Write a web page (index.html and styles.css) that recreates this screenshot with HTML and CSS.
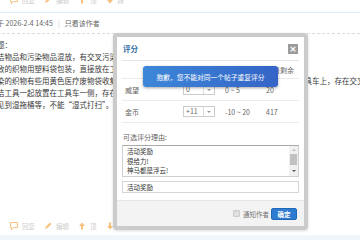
FILE: index.html
```html
<!DOCTYPE html>
<html lang="zh-CN">
<head>
    <meta charset="UTF-8">
    <meta name="viewport" content="width=device-width, initial-scale=1.0">
    <title>评分</title>
    <link rel="stylesheet" href="styles.css">
</head>
<body>
    <div class="ops ops-top">
        <span class="op"><svg viewBox="0 0 8 8"><path d="M0.5 0.5h7v5h-4l-2 2v-2h-1z" fill="none" stroke="#f7c07c" stroke-width="1"/></svg>回复</span>
        <span class="op"><svg viewBox="0 0 8 8"><path d="M1 7l1-2.5 4-4 1.5 1.5-4 4z" fill="#f7c07c"/></svg>编辑</span>
        <span class="op"><svg viewBox="0 0 8 8"><path d="M4 0.5l3 3.5h-2v3.5h-2v-3.5h-2z" fill="#f7c07c"/></svg>顶</span>
        <span class="op"><svg viewBox="0 0 8 8"><path d="M4 7.5l3-3.5h-2v-3.5h-2v3.5h-2z" fill="#f7c07c"/></svg>踩</span>
    </div>
    <div class="blue-line"></div>
    <div class="post-meta">于 2026-2-4 14:45<span class="pipe">|</span>只看该作者</div>

    <div class="post-body">
        <div>题：</div>
        <div>洁物品和污染物品混放，有交叉污染的情况，需要进行整改并加强日常管理。</div>
        <div>致的织物用塑料袋包装，直接放在工具车上，存在交叉污染的风险隐患。</div>
        <div>染的织物有些用黄色医疗废物袋收集，放置时污染布草与清洁工具等物品混放在同一辆保洁工具车上，存在交叉污染风险。</div>
        <div>洁工具一起放置在工具车一侧，存在交叉污染的隐患。</div>
        <div>见到湿拖桶等，不能“湿式打扫”。</div>
    </div>

    <div class="ops ops-bottom">
        <span class="op"><svg viewBox="0 0 8 8"><path d="M0.5 0.5h7v5h-4l-2 2v-2h-1z" fill="none" stroke="#f7c07c" stroke-width="1"/></svg>回复</span>
        <span class="op"><svg viewBox="0 0 8 8"><path d="M1 7l1-2.5 4-4 1.5 1.5-4 4z" fill="#f7c07c"/></svg>编辑</span>
        <span class="op"><svg viewBox="0 0 8 8"><path d="M4 0.5l3 3.5h-2v3.5h-2v-3.5h-2z" fill="#f7c07c"/></svg>顶</span>
        <span class="op"><svg viewBox="0 0 8 8"><path d="M4 7.5l3-3.5h-2v-3.5h-2v3.5h-2z" fill="#f7c07c"/></svg>踩</span>
    </div>
    <div class="band"></div>

    <div class="dlg">
        <div class="dlg-panel">
            <div class="dlg-head">
                <span class="dlg-title">评分</span>
                <span class="dlg-close">×</span>
            </div>

            <div class="rate-table">
                <div class="cell head"></div>
                <div class="cell head">评分</div>
                <div class="cell head">评分区间</div>
                <div class="cell head">今日剩余</div>

                <div class="cell">威望</div>
                <div class="cell"><span class="sel"><span class="sel-val">0</span><span class="sel-arr"><i></i></span></span></div>
                <div class="cell">0 ~ 5</div>
                <div class="cell">20</div>

                <div class="cell">金币</div>
                <div class="cell"><span class="sel"><span class="sel-val">+11</span><span class="sel-arr"><i></i></span></span></div>
                <div class="cell">-10 ~ 20</div>
                <div class="cell">417</div>
            </div>

            <div class="reason-label">可选评分理由:</div>
            <div class="reason-list">
                <div class="reason-items">
                    <div>活动奖励</div>
                    <div>很给力!</div>
                    <div>神马都是浮云!</div>
                </div>
                <div class="scroll">
                    <i class="arr-up"></i>
                    <span class="thumb"></span>
                    <i class="arr-down"></i>
                </div>
            </div>
            <div class="reason-input">活动奖励</div>

            <div class="dlg-foot">
                <label class="notify">
                    <span class="chk"><svg viewBox="0 0 7 7"><path d="M1.2 3.6l1.5 1.5 3-3.4" fill="none" stroke="#f4f4f4" stroke-width="1.1"/></svg></span>
                    通知作者
                </label>
                <span class="ok">确定</span>
            </div>
        </div>
    </div>

    <div class="toast">抱歉，您不能对同一个帖子重复评分</div>
</body>
</html>
```

FILE: styles.css
```css
body { margin: 0; width: 360px; height: 240px; overflow: hidden; position: relative; background: #fff; color: #333; font-family: "Noto Sans CJK SC", sans-serif; }

.ops { display: flex; align-items: center; gap: 9px; height: 10px; padding-left: 10px; font-size: 6.5px; color: #cdcdcd; }
.ops-top { margin-top: -5px; }
.ops-bottom { margin-top: 110px; }
.op { display: flex; align-items: center; gap: 4px; }
.op svg { width: 8px; height: 8px; }

.blue-line { height: 1px; margin-top: 7px; background: #e2ecf6; }
.post-meta { height: 20px; line-height: 20px; margin-left: -3px; font-size: 7px; color: #666; border-bottom: 1px dashed #dcdcdc; white-space: nowrap; }
.pipe { margin: 0 5px; color: #ccc; }

.post-body { padding-top: 5px; margin-left: -3px; font-size: 7.5px; line-height: 12px; color: #3a3a3a; white-space: nowrap; }
.band { height: 10px; margin-top: 4px; background: #f0f6fc; }

.dlg { position: absolute; left: 113px; top: 33px; width: 187px; height: 189px; padding: 4px; background: #cbcbcb; border-radius: 4px; box-shadow: 0 1px 3px rgba(0,0,0,0.15); }
.dlg-panel { height: 100%; display: flex; flex-direction: column; background: #fff; }
.dlg-head { height: 23px; margin: 0 5px; padding: 0 1px; display: flex; align-items: center; justify-content: space-between; border-bottom: 1px solid #e5e5e5; }
.dlg-title { font-size: 7.5px; font-weight: bold; color: #2f6ba5; }
.dlg-close { width: 10px; height: 10px; display: flex; align-items: center; justify-content: center; background: #9b9b9b; color: #fff; font-size: 9px; line-height: 10px; font-family: "DejaVu Sans", sans-serif; font-weight: bold; }

.rate-table { margin: 0 5px; display: grid; grid-template-columns: 58px 42px 41px 1fr; font-size: 7px; color: #666; }
.cell { height: 21px; padding-left: 3px; display: flex; align-items: center; border-bottom: 1px solid #ebebeb; white-space: nowrap; }
.cell.head { height: 17px; }
.sel { width: 32px; height: 11px; box-sizing: border-box; display: flex; border: 1px solid #ccc; line-height: 9px; }
.sel-val { flex: 1; padding-left: 2px; }
.sel-arr { width: 10px; display: flex; align-items: center; justify-content: center; border-left: 1px solid #ddd; }
.sel-arr i { border-left: 2px solid transparent; border-right: 2px solid transparent; border-top: 2px solid #999; }

.reason-label { margin: 9px 5px 0; padding-left: 1px; font-size: 7px; line-height: 10px; color: #666; }
.reason-list { height: 32px; margin: 3px 5px 0; box-sizing: border-box; display: flex; border: 1px solid #cfcfcf; border-top-color: #a9a9a9; }
.reason-items { flex: 1; padding: 1px 4px; font-size: 6.5px; line-height: 9.5px; color: #333; }
.scroll { width: 9px; display: flex; flex-direction: column; align-items: center; background: #f1f1f1; }
.arr-up { margin-top: 3px; border-left: 2px solid transparent; border-right: 2px solid transparent; border-bottom: 2px solid #bbb; }
.thumb { width: 7px; height: 11px; margin-top: 3px; background: #c1c1c1; }
.arr-down { margin-top: 5px; border-left: 2px solid transparent; border-right: 2px solid transparent; border-top: 2px solid #555; }
.reason-input { height: 12px; margin: 4px 5px 0; padding-left: 4px; box-sizing: border-box; border: 1px solid #d5d5d5; font-size: 6.5px; line-height: 10px; color: #333; }

.dlg-foot { margin-top: auto; height: 25px; padding-right: 7px; display: flex; align-items: center; justify-content: flex-end; background: #f3f3f3; border-top: 1px solid #e6e6e6; }
.notify { display: flex; align-items: center; gap: 3px; margin-right: 2px; font-size: 6.5px; color: #777; }
.chk { width: 7px; height: 7px; box-sizing: border-box; display: flex; background: #dcdcdc; border: 1px solid #ccc; border-radius: 1px; }
.chk svg { width: 100%; height: 100%; }
.ok { width: 26px; height: 12px; box-sizing: border-box; display: flex; align-items: center; justify-content: center; background: #2d7cd1; border: 1px solid #2268b8; border-radius: 2px; color: #fff; font-size: 6.5px; font-weight: bold; }

.toast { position: absolute; left: 143px; top: 66px; width: 135px; height: 21px; display: flex; align-items: center; justify-content: center; border-radius: 3px; background: linear-gradient(to right, #3d87d8, #3464c7); box-shadow: 0 1px 3px rgba(0,0,0,0.35); color: #fff; font-size: 6.75px; white-space: nowrap; }
```
